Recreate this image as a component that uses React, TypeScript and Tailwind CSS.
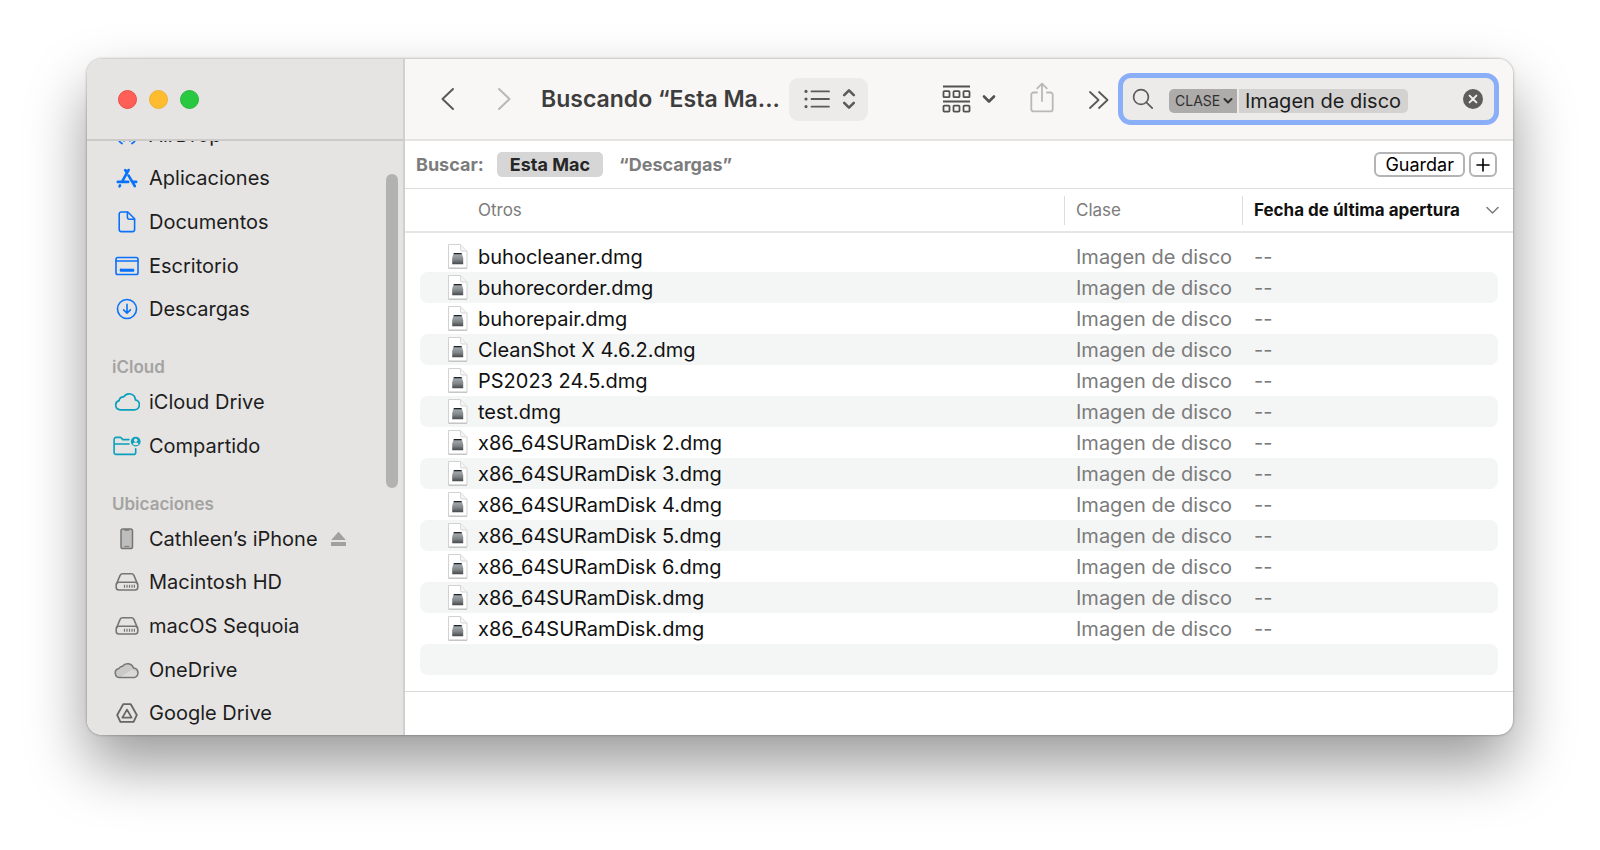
import type { ReactNode } from "react";

const files = [
  "buhocleaner.dmg",
  "buhorecorder.dmg",
  "buhorepair.dmg",
  "CleanShot X 4.6.2.dmg",
  "PS2023 24.5.dmg",
  "test.dmg",
  "x86_64SURamDisk 2.dmg",
  "x86_64SURamDisk 3.dmg",
  "x86_64SURamDisk 4.dmg",
  "x86_64SURamDisk 5.dmg",
  "x86_64SURamDisk 6.dmg",
  "x86_64SURamDisk.dmg",
  "x86_64SURamDisk.dmg",
];

type IconProps = {
  w: number;
  h: number;
  sw?: number;
  className?: string;
  children: ReactNode;
};

function Icon({ w, h, sw = 1.5, className = "", children }: IconProps) {
  return (
    <svg
      width={w}
      height={h}
      viewBox={`0 0 ${w} ${h}`}
      fill="none"
      stroke="currentColor"
      strokeWidth={sw}
      strokeLinecap="round"
      strokeLinejoin="round"
      aria-hidden="true"
      className={`shrink-0 ${className}`}
    >
      {children}
    </svg>
  );
}

const AirDropIcon = () => (
  <Icon w={22} h={22} sw={1.8}>
    <path d="M6 19.600a9.500 9.500 0 1 1 10 0M8 16.800a6.200 6.200 0 1 1 6 0M9.400 13.400a2.600 2.600 0 1 1 3.200 0" />
  </Icon>
);

const AppsIcon = () => (
  <Icon w={22} h={20} sw={2.6}>
    <path d="M12.600 2 6.600 12.600M9.200 2l1.700 2.900M12.600 7.600l6.200 10.600M1.800 13.900h10.400M17 13.900h3.200M4 17.400l-.5.9" />
  </Icon>
);

const DocIcon = () => (
  <Icon w={18} h={22} sw={1.6}>
    <path d="M3.2 1h6.6l6.8 6.8v10.8a2 2 0 0 1-2 2H3.200a2 2 0 0 1-2-2V3a2 2 0 0 1 2-2Z" />
    <path d="M9.400 1.200v5.400a1.600 1.600 0 0 0 1.600 1.600h5.400" />
  </Icon>
);

const DesktopIcon = () => (
  <Icon w={24} h={20} sw={1.6}>
    <rect x="1" y="1.5" width="22" height="17" rx="1.8" />
    <path d="M1 5h22" />
    <rect x="5" y="13" width="14" height="2.4" rx="0.6" fill="currentColor" stroke="currentColor" strokeWidth="0.6" />
  </Icon>
);

const DownloadIcon = () => (
  <Icon w={22} h={22} sw={1.6}>
    <circle cx="11" cy="11" r="9.500" />
    <path d="M11 6.400v8.800M7.600 11.900l3.400 3.400 3.400-3.400" />
  </Icon>
);

const CloudIcon = () => (
  <Icon w={26} h={20} sw={1.7}>
    <path d="M6.200 17.800a4.700 4.700 0 0 1-1.100-9.200 4.100 4.100 0 0 1 4.600-3.700 6.300 6.300 0 0 1 11.700 3 5 5 0 0 1-1.100 9.900Z" />
  </Icon>
);

const SharedIcon = () => (
  <Icon w={28} h={20} sw={1.6}>
    <path d="M16 3.600H9.800L8.400 2a2 2 0 0 0-1.400-.6H3.100A2 2 0 0 0 1.100 3.400v13a2 2 0 0 0 2 2h17.600a2 2 0 0 0 2-2v-3.600M1.400 8H16" />
    <circle cx="22.700" cy="5.600" r="4.900" fill="currentColor" stroke="none" />
    <circle cx="22.700" cy="4.200" r="1.700" fill="#e5e4e3" stroke="none" />
    <path d="M19.600 8.200c.6-1.300 1.700-1.700 3.100-1.700s2.500.4 3.100 1.700c-1.700 1.500-4.500 1.500-6.200 0Z" fill="#e5e4e3" stroke="none" />
  </Icon>
);

const PhoneIcon = () => (
  <Icon w={14} h={22} sw={1.5}>
    <rect x="1" y="1" width="11.500" height="19.600" rx="1.800" fill="#bdbdbd" />
    <path d="M5 2h3.600" strokeWidth="1.600" />
    <path d="M4.800 18.400h4" strokeWidth="1" />
  </Icon>
);

const DiskIcon = () => (
  <Icon w={24} h={20} sw={1.6}>
    <path d="m1.600 11.800 3.500-8.400A2.800 2.800 0 0 1 7.600 1.800h8.800a2.800 2.800 0 0 1 2.500 1.600l3.500 8.400" />
    <rect x="1.200" y="10.200" width="21.600" height="7.800" rx="2.800" />
    <path d="M9.500 12.700v3M12 12.700v3M14.500 12.700v3M17 12.700v3M19.400 12.700v3" strokeWidth="1.200" strokeLinecap="butt" />
  </Icon>
);

const OneDriveIcon = () => (
  <Icon w={26} h={18} sw={1.5}>
    <path
      d="M5.800 16.600a4.600 4.600 0 0 1-.9-9.100 4.400 4.400 0 0 1 3.600-2.200 6.300 6.300 0 0 1 11 1.700 4.900 4.900 0 0 1 .9 9.600Z"
      fill="#c9c9c9"
    />
    <path d="M7 15.600 18 8.800l4 1.400 1 3-2.600 2.400Z" fill="#dadada" stroke="none" />
  </Icon>
);

const GoogleDriveIcon = () => (
  <Icon w={22} h={20} sw={1.8}>
    <path d="M7.200 1.200h7.600l6 10.800-3.200 6.800H4.400L1.200 12Z" />
    <path d="M11 6.600 6.400 14.600h9.200Z" />
  </Icon>
);

const DmgIcon = () => (
  <svg width="20" height="26" viewBox="0 0 20 26" aria-hidden="true" className="shrink-0">
    <defs>
      <linearGradient id="drive" x1="0" y1="0" x2="0" y2="1">
        <stop offset="0" stopColor="#a9b2b8" />
        <stop offset="0.6" stopColor="#808486" />
        <stop offset="1" stopColor="#46494b" />
      </linearGradient>
    </defs>
    <path d="M.5.500h12l6.500 6.500V24H.5Z" fill="#fff" stroke="#d2d2d2" strokeWidth="1" strokeLinejoin="round" />
    <path d="M.5 24.300H19" stroke="#bdbdbd" strokeWidth="1" />
    <path d="M12.500.5v5A1.500 1.500 0 0 0 14 7h5" fill="#f4f4f4" stroke="#d8d8d8" strokeWidth="1" />
    <path d="M5.500 9.200h8.400l1.300 5v6H4.200v-6Z" fill="url(#drive)" />
    <path d="M5.800 9h7.800v1.300H5.800Z" fill="#1f2326" />
  </svg>
);

function NavItem({ icon, label, tone, children }: { icon: ReactNode; label: string; tone: string; children?: ReactNode }) {
  return (
    <li className="flex items-center pl-[25px]">
      <a href="#" className="flex items-center gap-[7px] text-[#1d1d1d]">
        <span className={`flex w-[30px] justify-center ${tone}`}>{icon}</span>
        {label}
      </a>
      {children}
    </li>
  );
}

function Sidebar() {
  return (
    <aside className="flex w-[318px] shrink-0 flex-col border-r-2 border-[#d0d0cf] bg-[#e5e4e3]">
      <div className="z-10 flex h-[82px] shrink-0 items-center gap-3 border-b-2 border-[#cbcac9] pl-[31px]">
        <button aria-label="Cerrar" className="size-[19px] rounded-full border border-[#ee4b41] bg-[#ff5f57]" />
        <button aria-label="Minimizar" className="size-[19px] rounded-full border border-[#f0b12f] bg-[#febc2e]" />
        <button aria-label="Ampliar" className="size-[19px] rounded-full border border-[#25b737] bg-[#28c840]" />
      </div>
      <div className="flex min-h-0 flex-1 overflow-hidden">
        <nav className="-mt-7 flex-1 text-[20px] leading-6">
          <ul className="grid h-[218px] auto-rows-fr">
            <NavItem icon={<AirDropIcon />} label="AirDrop" tone="text-[#0a72f8]" />
            <NavItem icon={<AppsIcon />} label="Aplicaciones" tone="text-[#0a72f8]" />
            <NavItem icon={<DocIcon />} label="Documentos" tone="text-[#0a72f8]" />
            <NavItem icon={<DesktopIcon />} label="Escritorio" tone="text-[#0a72f8]" />
            <NavItem icon={<DownloadIcon />} label="Descargas" tone="text-[#0a72f8]" />
          </ul>
          <h2 className="mt-6 h-[25px] pl-[25px] text-[17px] font-semibold text-[#a3a3a2]">iCloud</h2>
          <ul className="grid h-[88px] auto-rows-fr">
            <NavItem icon={<CloudIcon />} label="iCloud Drive" tone="text-[#0a9fbc]" />
            <NavItem icon={<SharedIcon />} label="Compartido" tone="text-[#0a9fbc]" />
          </ul>
          <h2 className="mt-6 h-[25px] pl-[25px] text-[17px] font-semibold text-[#a3a3a2]">Ubicaciones</h2>
          <ul className="grid h-[218px] auto-rows-fr">
            <NavItem icon={<PhoneIcon />} label="Cathleen’s iPhone" tone="text-[#757575]">
              <button aria-label="Expulsar" className="ml-3 text-[#a0a09f]">
                <svg width="17" height="16" viewBox="0 0 17 16" fill="currentColor" aria-hidden="true">
                  <path d="M8.500.8 15.800 9H1.200Z" />
                  <rect x="1" y="11" width="15" height="4" rx="0.6" />
                </svg>
              </button>
            </NavItem>
            <NavItem icon={<DiskIcon />} label="Macintosh HD" tone="text-[#757575]" />
            <NavItem icon={<DiskIcon />} label="macOS Sequoia" tone="text-[#757575]" />
            <NavItem icon={<OneDriveIcon />} label="OneDrive" tone="text-[#757575]" />
            <NavItem icon={<GoogleDriveIcon />} label="Google Drive" tone="text-[#666]" />
          </ul>
        </nav>
        <div className="mt-[33px] mr-[5px] h-[314px] w-3 rounded-full bg-[#b2b2b0]" />
      </div>
    </aside>
  );
}

function SearchField() {
  return (
    <div className="flex h-[52px] w-[381px] items-center rounded-[13px] border-[5px] border-[#8aaef8] bg-[#ecebe9] pr-[11px] pl-[9px]">
      <Icon w={22} h={22} sw={1.7} className="text-[#5c5c5c]">
        <circle cx="9" cy="9" r="7.400" />
        <path d="m14.400 14.400 5.800 5.800" />
      </Icon>
      <div className="mt-1 ml-[15px] flex h-6 gap-0.5">
        <div className="grid items-center rounded-l-[5px] bg-[#adacab]">
          <select
            aria-label="Atributo"
            className="col-start-1 row-start-1 w-[68px] appearance-none pl-1.5 text-[14px] leading-6 text-[#2f2f2f] outline-none"
          >
            <option>CLASE</option>
          </select>
          <Icon w={10} h={8} sw={2} className="pointer-events-none col-start-1 row-start-1 mr-1 justify-self-end text-[#2f2f2f]">
            <path d="m1.500 2 3.500 3.500L8.500 2" />
          </Icon>
        </div>
        <input
          aria-label="Buscar"
          defaultValue="Imagen de disco"
          className="w-[169px] rounded-r-[5px] bg-[#d3d2d1] pl-1.5 text-[20px] leading-6 text-[#1d1d1d] outline-none"
        />
      </div>
      <button aria-label="Borrar búsqueda" className="ml-auto">
        <svg width="20" height="20" viewBox="0 0 20 20" aria-hidden="true">
          <circle cx="10" cy="10" r="10" fill="#5d5d5d" />
          <path d="m6.600 6.600 6.800 6.800M13.400 6.600l-6.800 6.800" stroke="#f0efee" strokeWidth="2" strokeLinecap="round" />
        </svg>
      </button>
    </div>
  );
}

function Toolbar() {
  return (
    <header className="flex h-[82px] shrink-0 items-center border-b-2 border-[#e5e4e3] bg-[#f8f7f5] pr-[14px] pl-[35px]">
      <button aria-label="Atrás" className="text-[#5a5a5a]">
        <Icon w={15} h={24} sw={2}>
          <path d="M13 2 2.500 12 13 22" />
        </Icon>
      </button>
      <button aria-label="Adelante" className="ml-[42px] text-[#b9b8b7]">
        <Icon w={15} h={24} sw={2}>
          <path d="M2 2l10.500 10L2 22" />
        </Icon>
      </button>
      <h1 className="ml-[29px] text-[23px] leading-7 font-semibold whitespace-nowrap text-[#3d3d3d]">Buscando “Esta Ma...</h1>
      <button aria-label="Visualización en lista" className="ml-[9px] flex h-[43px] w-[79px] items-center justify-center gap-3 rounded-[9px] bg-[#ecebe9] pl-1 text-[#5a5a5a]">
        <Icon w={26} h={20} sw={1.8}>
          <path d="M7.500 2.400H25M7.500 10H25M7.500 17.600H25" />
          <path d="M2 2.400h.01M2 10h.01M2 17.600h.01" strokeWidth="3.200" />
        </Icon>
        <Icon w={14} h={22} sw={2.600}>
          <path d="m2.200 7.200 4.800-4.800 4.800 4.800M2.200 14.800l4.800 4.800 4.800-4.800" />
        </Icon>
      </button>
      <div className="ml-auto flex items-center">
        <button aria-label="Agrupar" className="flex items-center gap-[11px] text-[#525252]">
          <Icon w={29} h={28} sw={1.8}>
            <path d="M1 1.500h27M1 16.500h27" strokeLinecap="butt" />
            <rect x="1.500" y="6.200" width="6" height="6" rx="0.8" />
            <rect x="11.500" y="6.200" width="6" height="6" rx="0.8" />
            <rect x="21.500" y="6.200" width="6" height="6" rx="0.8" />
            <rect x="1.500" y="20.600" width="6" height="6" rx="0.8" />
            <rect x="11.500" y="20.600" width="6" height="6" rx="0.8" />
            <rect x="21.500" y="20.600" width="6" height="6" rx="0.8" />
          </Icon>
          <Icon w={14} h={10} sw={2.600}>
            <path d="m2 2.500 5 5 5-5" />
          </Icon>
        </button>
        <button aria-label="Compartir" className="ml-[34px] pb-1 text-[#b9b8b7]">
          <Icon w={24} h={31} sw={1.800}>
            <path d="M7 10.500H3.500A2.200 2.200 0 0 0 1.300 12.700v14.500a2.200 2.200 0 0 0 2.200 2.200h17a2.200 2.200 0 0 0 2.200-2.200V12.700a2.200 2.200 0 0 0-2.200-2.200H17M12 19V2M7.200 6.400 12 1.600l4.800 4.800" />
          </Icon>
        </button>
        <button aria-label="Más" className="mt-0.5 mr-[9px] ml-[34px] text-[#5a5a5a]">
          <Icon w={21} h={18} sw={1.800}>
            <path d="m2 1 8.500 8L2 17M11 1l8.500 8L11 17" />
          </Icon>
        </button>
        <SearchField />
      </div>
    </header>
  );
}

function ScopeBar() {
  return (
    <div className="flex h-12 shrink-0 items-center border-b border-[#dddddd] pr-4 pl-[11px] text-[18px] leading-6 font-bold text-[#7c7c7c]">
      <span>Buscar:</span>
      <button className="ml-[13px] h-[25px] rounded-[5px] bg-[#d6d6d6] px-[13px] text-[#262626]">Esta Mac</button>
      <button className="ml-4">“Descargas”</button>
      <button className="ml-auto h-[25px] rounded-[6px] border-2 border-[#b4b4b4] px-[9px] text-[18px] leading-5 font-normal text-black">
        Guardar
      </button>
      <button aria-label="Añadir criterio" className="ml-1 flex h-[25px] w-7 items-center justify-center rounded-[6px] border-2 border-[#b4b4b4] text-black">
        <Icon w={14} h={14} sw={1.600}>
          <path d="M7 1v12M1 7h12" />
        </Icon>
      </button>
    </div>
  );
}

function FileTable() {
  return (
    <table className="w-full table-fixed border-collapse text-left">
      <colgroup>
        <col />
        <col className="w-[178px]" />
        <col className="w-[271px]" />
      </colgroup>
      <thead>
        <tr className="h-[43px] border-b-2 border-[#e6e6e6] text-[17px] leading-5 text-[#7b7b7b]">
          <th scope="col" className="p-0 pl-[73px] font-normal">Otros</th>
          <th scope="col" className="p-0 font-normal">
            <div className="flex h-[29px] items-center border-l border-[#dcdcdc] pl-[11px]">Clase</div>
          </th>
          <th scope="col" aria-sort="descending" className="p-0 font-bold text-[#111]">
            <div className="flex h-[29px] items-center justify-between border-l border-[#dcdcdc] pr-[14px] pl-[11px]">
              Fecha de última apertura
              <Icon w={13} h={9} sw={1.500} className="text-[#7b7b7b]">
                <path d="m1 1.500 5.500 5.500L12 1.500" />
              </Icon>
            </div>
          </th>
        </tr>
      </thead>
      <tbody className="text-[20px] leading-6 text-[#7b7b7b] before:block before:h-2 before:content-['']">
        {files.map((name, i) => {
          const stripe = i % 2 === 1 ? "bg-[#f4f5f5]" : "";
          return (
            <tr key={i}>
              <td className="p-0 pl-[15px]">
                <div className={`flex h-[31px] items-center gap-[10px] rounded-l-lg pl-7 text-[#111] ${stripe}`}>
                  <DmgIcon />
                  {name}
                </div>
              </td>
              <td className="p-0">
                <div className={`flex h-[31px] items-center pl-3 ${stripe}`}>Imagen de disco</div>
              </td>
              <td className="p-0 pr-[15px]">
                <div className={`flex h-[31px] items-center rounded-r-lg pl-3 ${stripe}`}>--</div>
              </td>
            </tr>
          );
        })}
        <tr>
          <td colSpan={3} className="p-0 px-[15px]">
            <div className="h-[31px] rounded-lg bg-[#f4f5f5]" />
          </td>
        </tr>
      </tbody>
    </table>
  );
}

export default function App() {
  return (
    <div className="min-h-screen bg-white px-[87px] pt-[59px] pb-[115px] font-['Inter',sans-serif]">
      <div className="flex overflow-hidden rounded-[15px] bg-white shadow-[0_0_2px_1px_rgba(0,0,0,0.18),0_30px_60px_rgba(0,0,0,0.4)]">
        <Sidebar />
        <main className="flex min-w-0 flex-1 flex-col">
          <Toolbar />
          <ScopeBar />
          <FileTable />
          <footer className="mt-4 h-11 border-t border-[#d9d9d9]" />
        </main>
      </div>
    </div>
  );
}
